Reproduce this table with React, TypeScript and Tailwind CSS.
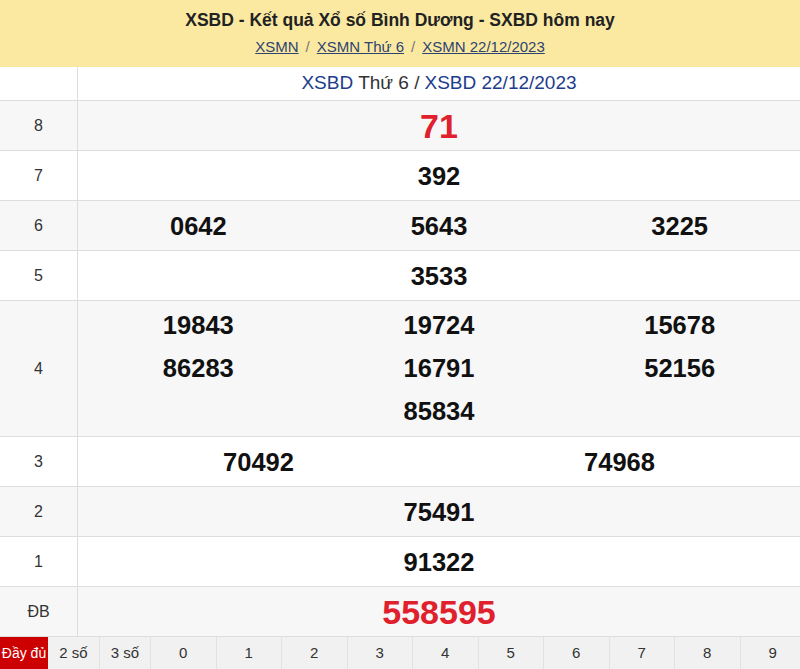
import React from 'react';

type Prize = { label: string; cols: number; nums: string[]; big?: boolean };

const prizes: Prize[] = [
  { label: '8', cols: 1, nums: ['71'], big: true },
  { label: '7', cols: 1, nums: ['392'] },
  { label: '6', cols: 3, nums: ['0642', '5643', '3225'] },
  { label: '5', cols: 1, nums: ['3533'] },
  { label: '4', cols: 3, nums: ['19843', '19724', '15678', '86283', '16791', '52156', '', '85834', ''] },
  { label: '3', cols: 2, nums: ['70492', '74968'] },
  { label: '2', cols: 1, nums: ['75491'] },
  { label: '1', cols: 1, nums: ['91322'] },
  { label: 'ĐB', cols: 1, nums: ['558595'], big: true },
];

const gridCols: Record<number, string> = {
  1: 'grid-cols-1',
  2: 'grid-cols-2',
  3: 'grid-cols-3',
};

const tabs = ['0', '1', '2', '3', '4', '5', '6', '7', '8', '9'];

export default function App() {
  return (
    <div className="w-[800px] h-[669px] overflow-hidden bg-white font-['Liberation_Sans',Arial,sans-serif]">
      {/* Header */}
      <div className="h-[67px] bg-[#fbe9a2] flex flex-col items-center pt-[9px]">
        <h1 className="text-[17.5px] font-bold text-[#222] leading-[22px]">
          XSBD - Kết quả Xổ số Bình Dương - SXBD hôm nay
        </h1>
        <div className="mt-[7px] text-[15px] leading-[18px] text-[#555]">
          <a className="underline text-[#2d4470]">XSMN</a>
          <span className="mx-[7px] text-[#777]">/</span>
          <a className="underline text-[#2d4470]">XSMN Thứ 6</a>
          <span className="mx-[7px] text-[#777]">/</span>
          <a className="underline text-[#2d4470]">XSMN 22/12/2023</a>
        </div>
      </div>

      {/* Title row */}
      <div className="flex h-[34px] border-b border-[#ddd]">
        <div className="w-[78px] border-r border-[#ddd]" />
        <div className="flex-1 flex items-center justify-center text-[19px] text-[#333]">
          <span className="text-[#1c3c8c]">XSBD</span>
          <span className="ml-[5px]">Thứ 6 /</span>
          <span className="ml-[5px] text-[#1c3c8c]">XSBD 22/12/2023</span>
        </div>
      </div>

      {/* Prize rows */}
      {prizes.map((p, i) => (
        <div
          key={p.label}
          className={`flex border-b border-[#ddd] ${i % 2 === 0 ? 'bg-[#f7f7f7]' : 'bg-white'} ${p.label === '4' ? 'h-[136px]' : 'h-[50px]'}`}
        >
          <div className="w-[78px] shrink-0 border-r border-[#ddd] flex items-center justify-center text-[16px] text-[#333]">
            {p.label}
          </div>
          <div className={`flex-1 grid ${gridCols[p.cols]} content-center ${p.label === '4' ? 'py-[3px]' : ''}`}>
            {p.nums.map((n, j) => (
              <div
                key={j}
                className={`text-center font-bold ${p.big ? 'text-[34px] leading-[50px] text-[#e0202c]' : 'text-[25.5px] text-[#111]'} ${p.label === '4' ? 'leading-[43px]' : p.big ? '' : 'leading-[50px]'}`}
              >
                {n}
              </div>
            ))}
          </div>
        </div>
      ))}

      {/* Bottom filter bar */}
      <div className="flex h-[33px] bg-[#f1f1f1] text-[15px] text-[#333]">
        <div className="w-[48px] shrink-0 bg-[#cc0000] text-white text-[14px] flex items-center justify-center whitespace-nowrap">Đầy đủ</div>
        <div className="w-[52px] shrink-0 border-r border-[#e2e2e2] flex items-center justify-center">2 số</div>
        <div className="w-[51px] shrink-0 border-r border-[#e2e2e2] flex items-center justify-center">3 số</div>
        {tabs.map((t) => (
          <div key={t} className="w-[65.5px] shrink-0 border-r border-[#e2e2e2] flex items-center justify-center">
            {t}
          </div>
        ))}
      </div>
    </div>
  );
}
